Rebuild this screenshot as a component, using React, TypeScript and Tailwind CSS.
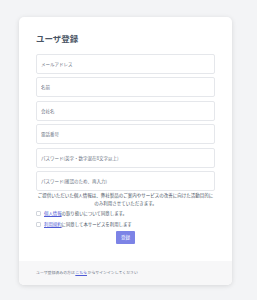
import React from 'react';

const fields = [
  'メールアドレス',
  '名前',
  '会社名',
  '電話番号',
  'パスワード(英字・数字混在8文字以上)',
  'パスワード(確認のため、再入力)',
];

export default function App() {
  return (
    <div
      className="min-h-[300px] w-[257px] bg-[#f3f4f6] pt-[17px]"
      style={{ fontFamily: '"Noto Sans CJK JP", "Noto Sans", sans-serif' }}
    >
      <div className="ml-[19px] w-[213px] rounded-[5px] bg-white shadow-[0_1px_5px_rgba(0,0,0,0.12)] overflow-hidden">
        <div className="px-[17px] pt-[13px] pb-[17px]">
          <h1 className="text-[8.5px] font-semibold leading-[16px] text-gray-600 mb-[8px]">ユーザ登録</h1>
          <div className="flex flex-col gap-[3.4px]">
            {fields.map((f) => (
              <input
                key={f}
                placeholder={f}
                className="h-[20px] w-full rounded-[2px] border border-gray-200 bg-white px-[4px] text-[4.5px] text-gray-700 placeholder:text-gray-500 outline-none"
              />
            ))}
          </div>
          <p className="text-center text-[4.5px] leading-[8.5px] text-gray-600 whitespace-nowrap">
            ご提供いただいた個人情報は、弊社製品のご案内やサービスの改善に向けた活動目的に
            <br />
            のみ利用させていただきます。
          </p>
          <label className="flex items-center gap-[3px] text-[4.4px] leading-[11px] text-gray-600">
            <span className="h-[5px] w-[5px] border border-gray-300 rounded-[1px]"></span>
            <span>
              <span className="text-[#4f5bd5] underline">個人情報</span>の取り扱いについて同意します。
            </span>
          </label>
          <label className="flex items-center gap-[3px] text-[4.4px] leading-[11px] text-gray-600">
            <span className="h-[5px] w-[5px] border border-gray-300 rounded-[1px]"></span>
            <span>
              <span className="text-[#4f5bd5] underline">利用規約</span>に同意して本サービスを利用します
            </span>
          </label>
          <div className="mt-[1px] flex justify-center">
            <button className="h-[13px] w-[19px] rounded-[1px] bg-[#7c83e6] text-[4.5px] text-white">登録</button>
          </div>
        </div>
        <div className="h-[24px] bg-[#f7f7f8] px-[17px] flex items-center text-[3.9px] text-gray-500">
          ユーザ登録済みの方は<span className="text-[#4f5bd5] underline mx-[0.5px]">こちら</span>からサインインしてください
        </div>
      </div>
    </div>
  );
}
